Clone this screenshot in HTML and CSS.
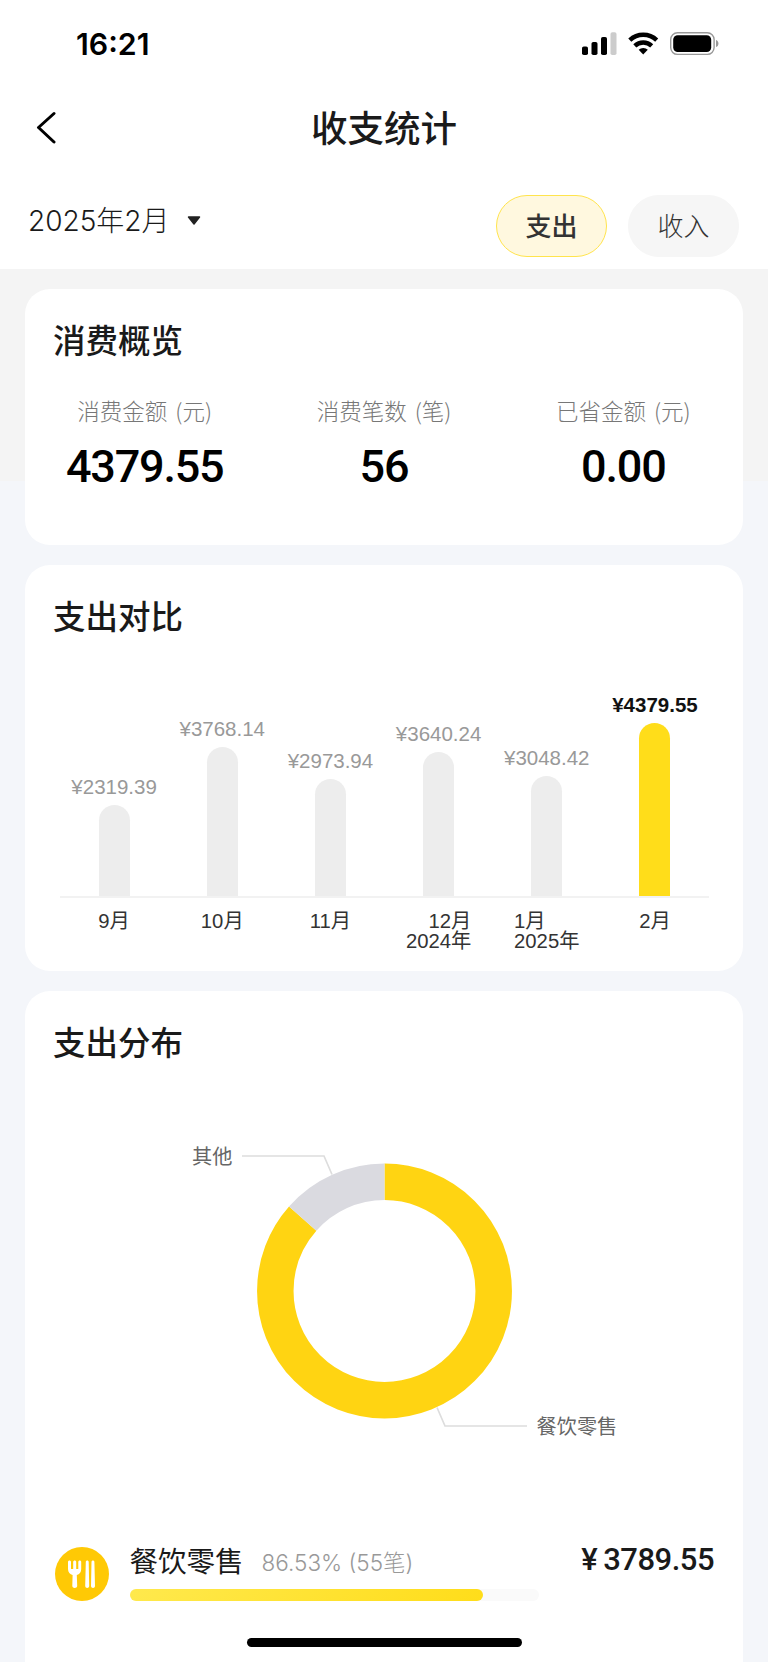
FILE: index.html
```html
<!DOCTYPE html>
<html lang="zh-CN">
<head>
  <meta charset="UTF-8" />
  <meta name="viewport" content="width=device-width, initial-scale=1.0">
  <title>收支统计</title>
  <link rel="stylesheet" href="styles.css">
</head>
<body>
  <header class="header">
    <div class="status-bar">
      <span class="status-time">16:21</span>
      <svg class="status-icons" width="138" height="24" viewBox="0 0 138 24">
        <rect x="0" y="14.5" width="6" height="8.5" rx="1.8" />
        <rect x="9.5" y="10" width="6" height="13" rx="1.8" />
        <rect x="19" y="5" width="6" height="18" rx="1.8" />
        <rect x="28.5" y="0.3" width="6" height="22.7" rx="1.8" fill="#ccc" />
        <g fill="none" stroke="#000" stroke-width="4.4">
          <path d="M47.8 8.2a19.5 19.5 0 0 1 26.9 0" />
          <path d="M52.8 13.8a12.3 12.3 0 0 1 16.9 0" />
        </g>
        <path d="M56.7 17.8a6.4 6.4 0 0 1 9.1 0L61.2 22.6z" />
        <rect x="88.7" y="0.8" width="43.4" height="21.6" rx="6.8" fill="none" stroke="#999" stroke-width="1.4" />
        <rect x="91.2" y="3.2" width="38" height="16.8" rx="4.5" />
        <path d="M134 8c3.3 1 3.3 6 0 7z" fill="#999" />
      </svg>
    </div>
    <div class="nav-bar">
      <svg class="back-icon" width="20" height="34" viewBox="0 0 20 34">
        <path d="M18 2.5L2.5 16.5L18 31" />
      </svg>
      <h1 class="nav-title">收支统计</h1>
    </div>
    <div class="filter-bar">
      <div class="month-select">
        <span class="month-text">2025年2月</span>
        <svg class="caret" width="14" height="10" viewBox="0 0 14 10">
          <path d="M1.5 1H12.5L7 8z" />
        </svg>
      </div>
      <div class="tabs">
        <button class="tab active">支出</button>
        <button class="tab">收入</button>
      </div>
    </div>
  </header>

  <main class="content">
    <section class="card overview">
      <h2 class="card-title">消费概览</h2>
      <div class="stats">
        <div class="stat">
          <div class="stat-label">消费金额 (元)</div>
          <div class="stat-value">4379.55</div>
        </div>
        <div class="stat">
          <div class="stat-label">消费笔数 (笔)</div>
          <div class="stat-value">56</div>
        </div>
        <div class="stat">
          <div class="stat-label">已省金额 (元)</div>
          <div class="stat-value">0.00</div>
        </div>
      </div>
    </section>

    <section class="card compare">
      <h2 class="card-title">支出对比</h2>
      <div class="bars">
        <div class="bar-col"><span class="bar-value">¥2319.39</span><div class="bar" style="height: 91.5px"></div></div>
        <div class="bar-col"><span class="bar-value">¥3768.14</span><div class="bar" style="height: 149px"></div></div>
        <div class="bar-col"><span class="bar-value">¥2973.94</span><div class="bar" style="height: 117.5px"></div></div>
        <div class="bar-col"><span class="bar-value">¥3640.24</span><div class="bar" style="height: 144px"></div></div>
        <div class="bar-col"><span class="bar-value">¥3048.42</span><div class="bar" style="height: 120.5px"></div></div>
        <div class="bar-col current"><span class="bar-value">¥4379.55</span><div class="bar" style="height: 173px"></div></div>
      </div>
      <div class="months">
        <div class="month">9月</div>
        <div class="month">10月</div>
        <div class="month">11月</div>
        <div class="month"><span class="year-end">12月<br>2024年</span></div>
        <div class="month"><span class="year-start">1月<br>2025年</span></div>
        <div class="month">2月</div>
      </div>
    </section>

    <section class="card spread">
      <h2 class="card-title">支出分布</h2>
      <svg class="donut" width="718" height="320" viewBox="0 0 718 320">
        <circle class="ring" cx="359.5" cy="160" r="109.2" pathLength="100" stroke-dasharray="86.53 13.47" transform="rotate(-90 359.5 160)" />
        <circle class="ring ring-other" cx="359.5" cy="160" r="109.2" pathLength="100" stroke-dasharray="13.47 86.53" transform="rotate(-138.5 359.5 160)" />
        <path class="guide" d="M217 25H299L307 43.5" />
        <path class="guide" d="M412 276.5L420 295H502" />
        <text class="donut-label" x="167" y="32.5">其他</text>
        <text class="donut-label" x="511.5" y="302.5">餐饮零售</text>
      </svg>
      <div class="item">
        <svg class="item-icon" width="54" height="54" viewBox="0 0 54 54">
          <circle cx="27" cy="27" r="27" fill="#ffc905" />
          <path d="M13 15C13 13 16 13 16 15V22H18.200V15C18.200 13 21.200 13 21.200 15V22H23.300V15C23.300 13 26.200 13 26.200 15V22C26.200 25.500 24.500 27.300 21.800 28L22.200 39C22.200 41.500 17.300 41.500 17.300 39L17.600 28C15 27.300 13 25.500 13 22z" fill="#fff" />
          <path d="M30.800 15C30.800 13 33.700 13 33.700 15L34.200 39C34.200 41.500 30.200 41.500 30.200 39z" fill="#fff" />
          <path d="M36.500 15C36.500 13 39.400 13 39.400 15L40 39C40 41.500 36 41.500 36 39z" fill="#fff" />
        </svg>
        <div class="item-main">
          <div class="item-head">
            <span class="item-name">餐饮零售</span>
            <span class="item-percent">86.53% (55笔)</span>
          </div>
          <div class="progress"><div class="progress-fill" style="width: 86.53%"></div></div>
        </div>
        <div class="item-amount"><span class="yen">¥</span>3789.55</div>
      </div>
    </section>
  </main>

  <div class="home-indicator"></div>
</body>
</html>
```

FILE: styles.css
```css
* {
  box-sizing: border-box;
}

body {
  margin: 0;
  height: 1662px;
  overflow: hidden;
  position: relative;
  background: linear-gradient(#f4f4f4 481px, #f4f6fa 481px);
  font-family: Inter, "Noto Sans CJK SC", sans-serif;
  color: #1a1a1a;
}

h1,
h2 {
  margin: 0;
  font-weight: 500;
}

.header {
  height: 269px;
  background: #fff;
}

.status-bar {
  display: flex;
  justify-content: space-between;
  align-items: center;
  height: 88px;
  padding: 0 48px 0 76px;
}

.status-time {
  font-size: 30.3px;
  font-weight: 600;
  color: #000;
}

.nav-bar {
  display: flex;
  align-items: center;
  height: 80px;
  padding: 0 36px;
}

.back-icon {
  fill: none;
  stroke: #000;
  stroke-width: 3;
  stroke-linecap: round;
  stroke-linejoin: round;
}

.nav-title {
  flex: 1;
  margin-right: 20px;
  padding-bottom: 4px;
  text-align: center;
  font-size: 36.5px;
}

.filter-bar {
  display: flex;
  justify-content: space-between;
  padding: 27px 29px 0 28px;
}

.month-select {
  display: flex;
  align-items: center;
  gap: 18px;
  height: 52px;
}

.month-text {
  padding-bottom: 4px;
  font-size: 28px;
  font-weight: 300;
}

.caret {
  fill: #222;
  stroke: #222;
  stroke-width: 1.5;
  stroke-linejoin: round;
}

.tabs {
  display: flex;
  gap: 21px;
}

.tab {
  width: 111px;
  height: 62px;
  padding: 0 0 4px;
  border: 1px solid #f6f6f6;
  border-radius: 31px;
  background: #f6f6f6;
  font-family: inherit;
  font-size: 26px;
  font-weight: 300;
  color: #333;
}

.tab.active {
  border-color: #ffe44d;
  background: #fff8df;
  font-weight: 500;
}

.content {
  display: flex;
  flex-direction: column;
  gap: 20px;
  padding: 20px 25px 0;
}

.card {
  background: #fff;
  border-radius: 25px;
}

.card-title {
  padding: 30px 28px 0;
  font-size: 32.5px;
  line-height: 46px;
}

.overview {
  height: 256px;
}

.stats {
  display: flex;
  margin-top: 29px;
}

.stat {
  flex: 1;
  text-align: center;
}

.stat-label {
  font-family: "Noto Sans CJK SC", sans-serif;
  font-size: 22.5px;
  font-weight: 300;
  line-height: 32px;
  word-spacing: 3px;
  color: #777;
}

.stat-value {
  margin-top: 16px;
  font-family: Roboto, sans-serif;
  font-size: 45px;
  font-weight: 500;
  line-height: 50px;
  letter-spacing: -1.2px;
  color: #000;
}

.compare {
  height: 406px;
}

.bars {
  display: flex;
  align-items: flex-end;
  height: 257px;
  margin: 0 34px 0 35px;
  border-bottom: 2px solid #f2f2f2;
}

.bar-col {
  flex: 1;
  display: flex;
  flex-direction: column;
  align-items: center;
}

.bar-value {
  margin-bottom: 7px;
  font-family: "Liberation Sans", Arial, sans-serif;
  font-size: 20.5px;
  line-height: 23px;
  color: #999;
}

.bar {
  width: 31px;
  border-radius: 16px 16px 0 0;
  background: #ededed;
}

.current .bar-value {
  font-weight: bold;
  color: #111;
}

.current .bar {
  background: #ffdd1a;
}

.months {
  display: flex;
  margin: 13px 34px 0 35px;
  font-family: "Liberation Sans", "Noto Sans CJK SC", sans-serif;
  font-size: 20.3px;
  line-height: 20px;
  color: #333;
}

.month {
  flex: 1;
  text-align: center;
}

.year-end,
.year-start {
  display: inline-block;
}

.year-end {
  text-align: right;
}

.year-start {
  text-align: left;
}

/* runs on below the fold */
.spread {
  height: 720px;
}

.donut {
  display: block;
  margin-top: 64px;
}

.ring {
  fill: none;
  stroke: #ffd412;
  stroke-width: 36.5;
}

.ring-other {
  stroke: #dadae0;
}

.guide {
  fill: none;
  stroke: #ddd;
  stroke-width: 1.7;
}

.donut-label {
  font-family: "Noto Sans CJK SC", sans-serif;
  font-size: 20.2px;
  fill: #666;
}

.item {
  display: flex;
  align-items: flex-start;
  margin-top: 92px;
  padding: 0 29px 0 30px;
}

.item-icon {
  margin-top: 4px;
}

.item-main {
  width: 409px;
  margin-left: 20.5px;
}

.item-head {
  display: flex;
  align-items: center;
  gap: 18px;
  height: 36px;
  white-space: nowrap;
}

.item-name {
  padding-bottom: 4px;
  font-size: 28.5px;
}

.item-percent {
  font-size: 22.5px;
  font-weight: 300;
  color: #999;
}

.progress {
  height: 12.5px;
  margin-top: 9.5px;
  border-radius: 7px;
  background: #fafafa;
}

.progress-fill {
  height: 100%;
  border-radius: 7px;
  background: linear-gradient(120deg, #ffe94d, #ffdd1a);
}

.item-amount {
  margin-left: auto;
  font-family: Roboto, sans-serif;
  font-size: 31px;
  font-weight: 500;
  line-height: 34px;
  letter-spacing: -0.5px;
}

.yen {
  margin-right: 6px;
}

.home-indicator {
  position: absolute;
  left: 247px;
  bottom: 15px;
  width: 275px;
  height: 9px;
  border-radius: 5px;
  background: #000;
}
```
